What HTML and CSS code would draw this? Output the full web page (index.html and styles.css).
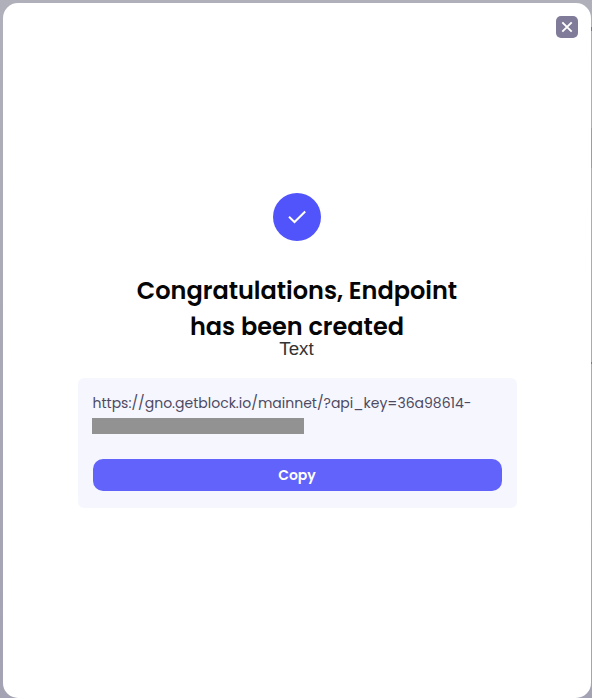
FILE: index.html
```html
<!DOCTYPE html>
<html lang="en">
<head>
<meta charset="utf-8">
<title>Endpoint created</title>
<link rel="stylesheet" href="styles.css">
</head>
<body>
<main class="dialog">
  <button class="close" aria-label="Close">
    <svg width="22" height="22" viewBox="0 0 22 22"><path d="M6.300 6.300l9.400 9.400M15.700 6.300l-9.400 9.400"/></svg>
  </button>
  <div class="badge">
    <svg width="48" height="48" viewBox="0 0 48 48"><path d="M16 23.800l5.500 5.200L32.200 18.500"/></svg>
  </div>
  <h1 class="title">Congratulations, Endpoint<br>has been created</h1>
  <p class="note">Text</p>
  <section class="endpoint">
    <p class="url">https://gno.getblock.io/mainnet/?api_key=36a98614-</p>
    <div class="redacted"></div>
    <button class="copy">Copy</button>
  </section>
</main>
</body>
</html>
```
FILE: styles.css
```css
* { box-sizing: border-box; }
body {
  margin: 0;
  height: 698px;
  padding: 3px 1px 0 3px;
  overflow: hidden;
  background:
    linear-gradient(#777783, #777783) right 27px / 1px 4px no-repeat,
    linear-gradient(#a3a081, #a3a081) right 128px / 1px 40px no-repeat,
    linear-gradient(#777783, #777783) right 362px / 1px 2px no-repeat,
    linear-gradient(#afb0b9, #a3a3b4);
  font-family: Poppins, Inter, sans-serif;
}
button { border: 0; padding: 0; font-family: inherit; }
svg { display: block; fill: none; stroke: #fff; stroke-width: 2; }
.close svg { stroke-width: 1.900; }
.dialog {
  position: relative;
  height: 695px;
  padding: 190px 74px 0 75px;
  border-radius: 15px;
  background: #fff;
}
.close {
  position: absolute;
  top: 13px;
  right: 13px;
  width: 22px;
  height: 22px;
  border-radius: 5px;
  background: #7f7b99;
}
.badge {
  width: 48px;
  height: 48px;
  margin: 0 auto 32px 195px;
  border-radius: 50%;
  background: #5153fb;
}
.title {
  margin: 0;
  padding-right: 1px;
  text-align: center;
  font-size: 24px;
  line-height: 36px;
  font-weight: 600;
  color: #050505;
  white-space: nowrap;
}
.note {
  margin: -7px 0 0;
  height: 40px;
  padding-right: 2px;
  text-align: center;
  font: 18.800px/22px "Liberation Sans", sans-serif;
  color: #333;
}
.endpoint {
  height: 130px;
  padding: 15px 15px 0;
  border-radius: 6px;
  background: #f6f6ff;
}
.url {
  margin: 0 0 0 -0.500px;
  font-size: 14px;
  line-height: 21px;
  color: #4d4a62;
  white-space: nowrap;
}
.redacted {
  width: 212px;
  height: 16px;
  margin: 4px 0 25px -1.500px;
  background: #929292;
}
.copy {
  display: block;
  width: 409px;
  height: 32px;
  padding-right: 1px;
  border-radius: 10px;
  background: #6163fa;
  color: #fff;
  font-size: 14px;
  font-weight: 600;
}
```
